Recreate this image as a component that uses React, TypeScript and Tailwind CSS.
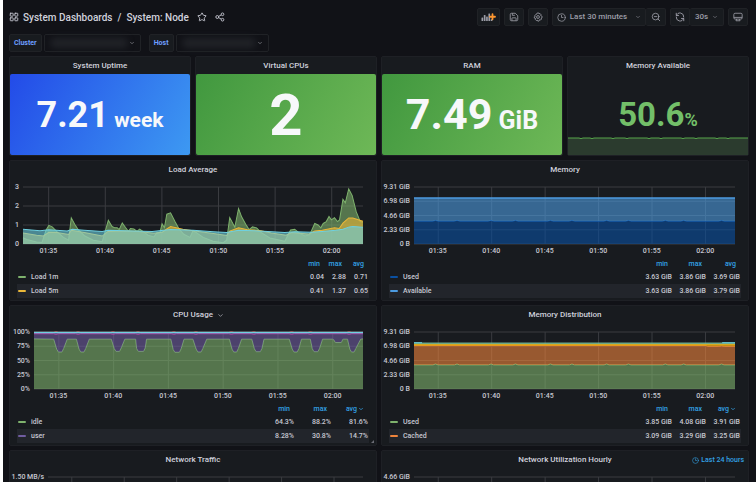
import type { ReactNode } from 'react'
import { ChevronDown, Clock3, LayoutGrid, Star, ZoomOut } from 'lucide-react'
import clsx from 'clsx'

type Point = [number, number]

interface Series {
  color: string
  points: Point[]
  base?: Point[]
  fill?: number
  line?: number
}

interface LegendRow {
  name: string
  color: string
  values: string[]
}

const TIMES = ['01:35', '01:40', '01:45', '01:50', '01:55', '02:00']
const GRID_START = 7.55
const GRID_STEP = 16.65

// x is the percentage of the time range, y is the load
const LOAD_1M: Point[] = [
  [0, 0.33], [1.1, 0.24], [4, 0.1], [5.6, 0.08], [6.8, 0.74], [7.6, 0.98], [8.6, 0.9], [10.4, 0.58], [11.9, 0.35],
  [13.4, 0.2], [14.2, 1.38], [15.2, 1.04], [16.3, 0.74], [18.2, 0.42], [20.7, 0.2], [23.3, 0.12], [24.3, 0.74],
  [25.1, 1.25], [26.2, 0.92], [27, 0.85], [27.7, 0.86], [28.3, 0.76], [29.2, 1.11], [30.1, 0.88], [31, 0.67],
  [31.6, 0.81], [32.6, 0.79], [33.5, 0.67], [34.3, 0.78], [35.4, 0.65], [36.8, 0.46], [38.5, 0.37], [39.3, 0.58],
  [40.3, 0.62], [40.9, 1.06], [41.6, 0.86], [42.3, 1.57], [43.4, 1.64], [44.7, 1.18], [45.9, 0.79], [47.3, 0.51],
  [49.1, 0.35], [50, 0.7], [51, 0.6], [53, 0.35], [55.9, 0.14], [58.9, 0.07], [59.9, 0.2], [60.8, 1.39],
  [62.3, 0.88], [63.4, 1.87], [64.3, 1.43], [65.5, 1.04], [66.5, 0.76], [67.5, 0.9], [68.7, 0.85], [70.1, 0.6],
  [72.6, 0.32], [77, 0.14], [78.7, 0.74], [79.9, 0.78], [81.4, 0.56], [82.9, 0.42], [84.3, 0.48], [85.8, 1.08],
  [86.8, 1], [87.6, 0.85], [88.3, 1.08], [89.2, 1.18], [90, 1.45], [90.7, 1.27], [91.6, 1.39], [92.5, 1.18],
  [93.1, 1.27], [94.1, 2.35], [94.8, 2.17], [95.8, 2.9], [96.8, 2.56], [98, 1.7], [99.2, 1.18], [100, 1.15],
]

const LOAD_5M: Point[] = [
  [0, 0.58], [4, 0.46], [6, 0.42], [7.6, 0.62], [10, 0.6], [13.4, 0.5], [14.2, 0.72], [18, 0.6], [23.3, 0.42],
  [25, 0.66], [30, 0.68], [34, 0.66], [38.5, 0.56], [41, 0.62], [42.3, 0.8], [43.4, 0.92], [47, 0.78], [50, 0.7],
  [56, 0.55], [59.9, 0.45], [60.8, 0.68], [63.4, 0.85], [66, 0.75], [70, 0.7], [73, 0.58], [77.4, 0.46], [79, 0.6],
  [84, 0.52], [85.8, 0.68], [88, 0.72], [91.6, 0.85], [93, 0.82], [94.1, 1.1], [95.8, 1.37], [97, 1.37], [100, 1.2],
]

const LOAD_15M: Point[] = [
  [0, 0.78], [5, 0.7], [7.6, 0.75], [13, 0.68], [14.5, 0.77], [18, 0.72], [23.3, 0.66], [25, 0.72], [30, 0.7],
  [38, 0.66], [43.4, 0.76], [50, 0.72], [56, 0.64], [59.9, 0.6], [63.4, 0.72], [68, 0.7], [72, 0.66], [77, 0.6],
  [80, 0.65], [85, 0.62], [88, 0.66], [92, 0.72], [94.1, 0.78], [96, 0.9], [97, 0.92], [100, 0.88],
]

// start, bottom from, bottom to, end, lowest idle value
const IDLE_DIPS = [
  [6, 7.4, 8.5, 10.1, 65], [12.9, 14.2, 15.2, 16.8, 65], [23.5, 24.9, 26, 27.6, 66], [30.9, 31.7, 33.3, 34.2, 66],
  [41.6, 42.8, 44.2, 45.6, 64.5], [48.3, 49.8, 50.8, 52.5, 65], [59.4, 60.7, 61.6, 63.1, 65],
  [66.2, 67.5, 68.8, 69.9, 65.5], [77.6, 79, 80, 81.3, 65], [84, 85.1, 86.3, 87.7, 65.5],
  [90.7, 91.6, 93.4, 94.1, 81.5], [95.3, 96.5, 97.3, 99.3, 65],
]

const CPU_IDLE: Point[] = [
  [0, 88],
  ...IDLE_DIPS.flatMap(([a, b, c, d, low]): Point[] => [
    [a, 87.5],
    [b - 0.5, low + 5],
    [b, low],
    [c, low],
    [c + 0.5, low + 6],
    [d, 87.5],
  ]),
  [100, 88],
]

const flat = (value: number): Point[] => [[0, value], [100, value]]

const bumpy = (value: number, bump: number): Point[] => [
  [0, value],
  ...[6.7, 13.4, 24, 31.6, 42.5, 49.2, 60, 66.8, 78.3, 84, 95.8].flatMap((x): Point[] => [
    [x - 0.8, value],
    [x, value + bump],
    [x + 0.8, value],
  ]),
  [100, value],
]

const MEM_USED = bumpy(3.72, 0.12)
const DIST_USED = bumpy(3.94, 0.14)
const DIST_CACHED: Point[] = [[0, 7.1], [91, 7.1], [91.4, 6.98], [95, 6.98], [95.8, 7.05], [96.6, 6.98], [100, 6.98]]

const LOAD_SERIES: Series[] = [
  { color: '#7eb26d', points: LOAD_1M },
  { color: '#eab839', points: LOAD_5M },
  { color: '#6ed0e0', points: LOAD_15M },
]

const MEMORY_SERIES: Series[] = [
  { color: '#0a50a1', points: MEM_USED },
  { color: '#4c9be0', points: flat(7.5), base: MEM_USED, line: 1.5 },
]

const CPU_SERIES: Series[] = [
  { color: '#7eb26d', points: CPU_IDLE },
  { color: '#705da0', points: flat(99), base: CPU_IDLE, line: 0 },
  { color: '#ba43a9', points: bumpy(97, -1), fill: 0 },
  { color: '#e24d42', points: bumpy(99.4, 1), fill: 0 },
  { color: '#6ed0e0', points: flat(99), fill: 0, line: 1.5 },
]

const DISTRIBUTION_SERIES: Series[] = [
  { color: '#7eb26d', points: DIST_USED },
  { color: '#ef843c', points: DIST_CACHED, base: DIST_USED },
  { color: '#e5a50a', points: flat(7.22), base: DIST_CACHED, line: 1.5 },
  { color: '#7ec4a0', points: flat(7.5), base: flat(7.3), line: 1 },
  { color: '#6ed0e0', points: [[0, 7.56], [2.5, 7.56]], fill: 0 },
  { color: '#6ed0e0', points: [[96, 7.56], [100, 7.56]], fill: 0 },
]

const GIB_TICKS = ['9.31 GiB', '6.98 GiB', '4.66 GiB', '2.33 GiB', '0 B']

function Plot({ series, max, rows }: { series: Series[]; max: number; rows: number }) {
  const toPath = (points: Point[]) => points.map(([x, y]) => `${x},${((1 - y / max) * 100).toFixed(2)}`).join(' ')

  return (
    <svg className="block h-[57px] w-full overflow-visible" viewBox="0 0 100 100" preserveAspectRatio="none">
      <g stroke="#3a3c40" strokeWidth="1">
        {Array.from({ length: rows + 1 }, (_, i) => (
          <line key={i} x1="0" x2="100" y1={(i * 100) / rows} y2={(i * 100) / rows} vectorEffect="non-scaling-stroke" />
        ))}
        {TIMES.map((time, i) => (
          <line
            key={time}
            x1={GRID_START + i * GRID_STEP}
            x2={GRID_START + i * GRID_STEP}
            y1="0"
            y2="100"
            vectorEffect="non-scaling-stroke"
          />
        ))}
      </g>
      {series.map((s, i) => (
        <g key={i}>
          <polygon
            points={`${toPath(s.points)} ${toPath([...(s.base ?? flat(0))].reverse())}`}
            fill={s.color}
            fillOpacity={s.fill ?? 0.6}
          />
          <polyline
            points={toPath(s.points)}
            fill="none"
            stroke={s.color}
            strokeWidth={s.line ?? 1}
            vectorEffect="non-scaling-stroke"
          />
        </g>
      ))}
    </svg>
  )
}

function Chart({
  ticks,
  series = [],
  max = 1,
  rows,
  axis,
  times = TIMES,
}: {
  ticks: string[]
  series?: Series[]
  max?: number
  rows?: number
  axis: string
  times?: string[]
}) {
  return (
    <div className="mt-2 flex pr-[13px] text-[7px] font-medium text-[#c7c8d2]">
      <div className={clsx('-mt-1.5 flex h-[69px] shrink-0 flex-col justify-between pr-1 text-right leading-3', axis)}>
        {ticks.map((tick) => (
          <span key={tick}>{tick}</span>
        ))}
      </div>
      <div className="min-w-0 flex-1">
        <Plot series={series} max={max} rows={rows ?? ticks.length - 1} />
        <div className="-ml-[3px] mr-[3px] grid h-[14px] grid-cols-6 pt-px text-center leading-[13px]">
          {times.map((time) => (
            <span key={time}>{time}</span>
          ))}
        </div>
      </div>
    </div>
  )
}

function Legend({ rows, col, sorted }: { rows: LegendRow[]; col: string; sorted?: boolean }) {
  return (
    <div className="px-[7px] pb-0.5">
      <table className="w-full table-fixed text-[7px] leading-3 font-medium text-[#c7c8d2]">
        <thead>
          <tr className="text-right text-[#33a2e5]">
            <th className="p-0" aria-label="Series" />
            {['min', 'max', 'avg'].map((name) => (
              <th key={name} className={clsx('p-0 font-medium', col)}>
                <span className="flex h-3 items-center justify-end pr-[5px]">
                  {name}
                  {sorted && name === 'avg' && <ChevronDown size={6} strokeWidth={3} className="ml-px" />}
                </span>
              </th>
            ))}
          </tr>
        </thead>
        <tbody>
          {rows.map((row) => (
            <tr key={row.name} className="even:bg-[#22252b]">
              <td className="p-0">
                <span className="flex h-[14px] items-center gap-[5px] pl-px">
                  <span className="h-0.5 w-2 rounded-full" style={{ background: row.color }} />
                  {row.name}
                </span>
              </td>
              {row.values.map((value, i) => (
                <td key={i} className="p-0 pr-px text-right whitespace-nowrap">
                  {value}
                </td>
              ))}
            </tr>
          ))}
        </tbody>
      </table>
    </div>
  )
}

function Panel({
  title,
  menu,
  extra,
  children,
}: {
  title: string
  menu?: boolean
  extra?: ReactNode
  children?: ReactNode
}) {
  return (
    <section className="relative rounded-xs border border-[#1e2025] bg-[#181b1f]">
      <h2 className="flex h-[18px] items-center justify-center text-[8px] font-medium text-[#d0d1dc]">
        {title}
        {menu && <ChevronDown size={7} strokeWidth={2} className="-mr-[11px] ml-1" />}
      </h2>
      {extra}
      {children}
    </section>
  )
}

function Stat({
  title,
  value,
  unit,
  size,
  unitSize,
  gradient,
}: {
  title: string
  value: string
  unit?: string
  size: string
  unitSize?: string
  gradient: string
}) {
  return (
    <Panel title={title}>
      <div className={clsx('-mt-px flex h-[81px] items-center justify-center rounded-xs text-[#f7f8fa]', gradient)}>
        <p className={clsx('leading-none font-bold whitespace-pre', size)}>
          {value}
          {unit && <span className={unitSize}> {unit}</span>}
        </p>
      </div>
    </Panel>
  )
}

function ToolButton({ label, className, children }: { label: string; className?: string; children: ReactNode }) {
  return (
    <button
      type="button"
      aria-label={label}
      className={clsx(
        'flex h-[18px] items-center justify-center rounded-xs border border-[#202226] bg-[#181b1f] text-[#9c9da7]',
        className
      )}
    >
      {children}
    </button>
  )
}

function Variable({ id, label, width, smudge }: { id: string; label: string; width: string; smudge: string }) {
  return (
    <div className="flex gap-0.5">
      <label
        htmlFor={id}
        className="flex h-[18px] items-center rounded-xs border border-[#202226] bg-[#181b1f] px-1 text-[7px] font-bold text-[#6e9fff]"
      >
        {label}
      </label>
      <div className={clsx('relative h-[18px]', width)}>
        <select id={id} className="h-full w-full appearance-none rounded-xs border border-[#202226] bg-[#111217]">
          <option value="" />
        </select>
        <span className={clsx('absolute top-1 left-1.5 h-2.5 rounded-full bg-[#202227] blur-[3px]', smudge)} />
        <ChevronDown size={6} className="pointer-events-none absolute top-1.5 right-1.5 text-[#b0b1bb]" />
      </div>
    </div>
  )
}

function ShareIcon() {
  return (
    <svg width="10" height="10" viewBox="0 0 24 24" fill="none" stroke="currentColor" strokeWidth="2.2">
      <circle cx="5.5" cy="12" r="3.5" />
      <circle cx="18" cy="5.5" r="3.2" />
      <circle cx="18" cy="18.5" r="3.2" />
      <path d="M8.8 10.5 15 7M8.8 13.5 15 17" />
    </svg>
  )
}

function AddPanelIcon() {
  return (
    <svg width="15" height="10" viewBox="0 0 30 20">
      <g fill="#9c9da7">
        <rect x="1" y="11" width="3.4" height="7" rx="1" />
        <rect x="5.6" y="6" width="3.4" height="12" rx="1" />
        <rect x="10.2" y="9" width="3.4" height="9" rx="1" />
        <rect x="14.8" y="3" width="3.4" height="15" rx="1" />
        <rect x="19.4" y="14.5" width="3.4" height="3.5" rx="1" />
      </g>
      <path d="M23 4.5v10M18 9.5h10" stroke="#ff9830" strokeWidth="3.6" strokeLinecap="round" />
    </svg>
  )
}

function SaveIcon() {
  return (
    <svg width="10" height="10" viewBox="0 0 24 24" fill="none" stroke="currentColor" strokeWidth="2" strokeLinejoin="round">
      <path d="M3 6a3 3 0 0 1 3-3h9l6 6v9a3 3 0 0 1-3 3H6a3 3 0 0 1-3-3z" />
      <path d="M8 3v5h6M7 21v-6a1 1 0 0 1 1-1h8a1 1 0 0 1 1 1v6" />
    </svg>
  )
}

function GearIcon() {
  return (
    <svg width="10" height="10" viewBox="0 0 24 24" fill="none" stroke="currentColor" strokeWidth="2" strokeLinejoin="round">
      <path d="m9.5 4.5 1-2.3h3l1 2.3 2.3-1 2.2 2.2-1 2.3 3.8 2.4v3.2l-2.3 1 1 2.3-2.4 2.4-2.3-1-1.3 3.5h-3.2l-1-2.3-2.3 1-2.3-2.3 1-2.3-3.5-1.3v-3.2l2.3-1-1-2.3 2.3-2.4z" />
      <circle cx="12" cy="12" r="3.4" />
    </svg>
  )
}

function SyncIcon() {
  return (
    <svg width="10" height="10" viewBox="0 0 24 24" fill="none" stroke="currentColor" strokeWidth="2.2" strokeLinecap="round" strokeLinejoin="round">
      <path d="M3 3v5.5h5.5M3.5 8.5A9 9 0 0 1 21 12" />
      <path d="M21 21v-5.5h-5.5M20.5 15.5A9 9 0 0 1 3 12" />
    </svg>
  )
}

function MonitorIcon() {
  return (
    <svg width="10" height="10" viewBox="0 0 24 24" fill="none" stroke="currentColor" strokeWidth="2" strokeLinejoin="round">
      <rect x="2" y="3" width="20" height="14" rx="3" />
      <path d="M2 13h20M9 17l-2 4h10l-2-4" />
    </svg>
  )
}

function Header() {
  return (
    <header className="flex h-[34px] items-center justify-between pr-2 pl-1.5">
      <div className="flex items-center text-[#c7c8d2]">
        <LayoutGrid size={10} strokeWidth={2.2} />
        <nav className="ml-1 flex gap-[5px] text-[10px] font-medium whitespace-nowrap text-[#d0d1dc]">
          <a href="#dashboards">System Dashboards</a>
          <span>/</span>
          <a href="#node">System: Node</a>
        </nav>
        <button type="button" aria-label="Mark as favorite" className="ml-2">
          <Star size={10} strokeWidth={2.2} />
        </button>
        <button type="button" aria-label="Share dashboard" className="ml-2">
          <ShareIcon />
        </button>
      </div>

      <div className="flex gap-1">
        <ToolButton label="Add panel" className="w-[23px]">
          <AddPanelIcon />
        </ToolButton>
        <ToolButton label="Save dashboard" className="w-5">
          <SaveIcon />
        </ToolButton>
        <ToolButton label="Dashboard settings" className="w-5">
          <GearIcon />
        </ToolButton>
        <div className="flex">
          <ToolButton label="Time range" className="w-[94px] text-[8px] font-medium">
            <Clock3 size={9} />
            <span className="ml-1 whitespace-nowrap">Last 30 minutes</span>
            <ChevronDown size={6} className="ml-2" />
          </ToolButton>
          <ToolButton label="Zoom out" className="w-5 border-l-0">
            <ZoomOut size={10} />
          </ToolButton>
        </div>
        <div className="flex">
          <ToolButton label="Refresh" className="w-5">
            <SyncIcon />
          </ToolButton>
          <ToolButton label="Refresh interval" className="w-[34px] border-l-0 text-[8px] font-medium">
            30s
            <ChevronDown size={6} className="ml-1" />
          </ToolButton>
        </div>
        <ToolButton label="Cycle view mode" className="w-5">
          <MonitorIcon />
        </ToolButton>
      </div>
    </header>
  )
}

export default function App() {
  return (
    <div className="h-screen overflow-hidden bg-white pl-[3px] font-['Roboto',sans-serif]">
      <main className="min-h-full bg-[#111217]">
        <Header />

        {/* Template variables */}
        <div className="flex gap-2 pl-1.5">
          <Variable id="cluster" label="Cluster" width="w-[97px]" smudge="w-[78px]" />
          <Variable id="host" label="Host" width="w-[93px]" smudge="w-[74px]" />
        </div>

        {/* Stats */}
        <div className="mt-1 grid grid-cols-4 gap-1 pr-[7px] pl-1.5">
          <Stat
            title="System Uptime"
            value="7.21"
            unit="week"
            size="text-[36px]"
            unitSize="text-[21px]"
            gradient="bg-[linear-gradient(120deg,#234be8,#3d99f2)]"
          />
          <Stat title="Virtual CPUs" value="2" size="text-[58px]" gradient="bg-[linear-gradient(120deg,#41983f,#6eb857)]" />
          <Stat
            title="RAM"
            value="7.49"
            unit="GiB"
            size="text-[43px]"
            unitSize="text-[25px]"
            gradient="bg-[linear-gradient(120deg,#41983f,#6eb857)]"
          />
          <Panel title="Memory Available">
            <div className="-mt-px flex h-[81px] items-center justify-center text-[#73bf69]">
              <p className="text-[33px] leading-none font-bold">
                50.6<span className="text-[18px]">%</span>
              </p>
            </div>
            <svg
              className="absolute bottom-0 left-0 h-[18px] w-full"
              viewBox="0 0 180 18"
              preserveAspectRatio="none"
              fill="none"
            >
              <path d="M0 1h180v17H0z" fill="#2b3b2e" />
              <path
                d="M0 1h11l2 .6 2-.6h7l2 .6 2-.6h17l2 .6 2-.6h10l2 .6 2-.6h18l2 .6 2-.6h8l2 .6 2-.6h18l2 .6 2-.6h9l2 .6 2-.6h17l2 .6 2-.6h7l2 .6 2-.6h18"
                stroke="#56a64b"
              />
            </svg>
          </Panel>
        </div>

        {/* Graphs */}
        <div className="mt-1 grid grid-cols-2 gap-1 pr-[7px] pl-1.5">
          <Panel title="Load Average">
            <Chart ticks={['3', '2', '1', '0']} series={LOAD_SERIES} max={3} axis="w-[13px]" />
            <Legend
              col="w-[22px]"
              rows={[
                { name: 'Load 1m', color: '#7eb26d', values: ['0.04', '2.88', '0.71'] },
                { name: 'Load 5m', color: '#eab839', values: ['0.41', '1.37', '0.65'] },
              ]}
            />
          </Panel>
          <Panel title="Memory">
            <Chart ticks={GIB_TICKS} series={MEMORY_SERIES} max={9.31} axis="w-8" />
            <Legend
              col="w-[34px]"
              rows={[
                { name: 'Used', color: '#0a50a1', values: ['3.63 GiB', '3.86 GiB', '3.69 GiB'] },
                { name: 'Available', color: '#4c9be0', values: ['3.63 GiB', '3.86 GiB', '3.79 GiB'] },
              ]}
            />
          </Panel>
          <Panel title="CPU Usage" menu>
            <Chart ticks={['100%', '75%', '50%', '25%', '0%']} series={CPU_SERIES} max={100} axis="w-6" />
            <Legend
              col="w-[37px]"
              sorted
              rows={[
                { name: 'idle', color: '#7eb26d', values: ['64.3%', '88.2%', '81.6%'] },
                { name: 'user', color: '#705da0', values: ['8.28%', '30.8%', '14.7%'] },
              ]}
            />
            <svg className="absolute right-0.5 bottom-0.5" width="3" height="3" viewBox="0 0 3 3">
              <path d="M3 0v3H0z" fill="#6b6c75" />
            </svg>
          </Panel>
          <Panel title="Memory Distribution">
            <Chart ticks={GIB_TICKS} series={DISTRIBUTION_SERIES} max={9.31} axis="w-8" />
            <Legend
              col="w-[34px]"
              sorted
              rows={[
                { name: 'Used', color: '#7eb26d', values: ['3.85 GiB', '4.08 GiB', '3.91 GiB'] },
                { name: 'Cached', color: '#ef843c', values: ['3.09 GiB', '3.29 GiB', '3.25 GiB'] },
              ]}
            />
          </Panel>
          <Panel title="Network Traffic">
            <Chart ticks={['1.50 MB/s']} rows={3} axis="w-[38px]" times={[]} />
          </Panel>
          <Panel
            title="Network Utilization Hourly"
            extra={
              <span className="absolute top-0 right-1 flex h-[18px] items-center gap-0.5 text-[7px] font-medium text-[#33a2e5]">
                <Clock3 size={7} />
                Last 24 hours
              </span>
            }
          >
            <Chart ticks={['4.66 GiB']} rows={4} axis="w-8" times={[]} />
          </Panel>
        </div>
      </main>
    </div>
  )
}
